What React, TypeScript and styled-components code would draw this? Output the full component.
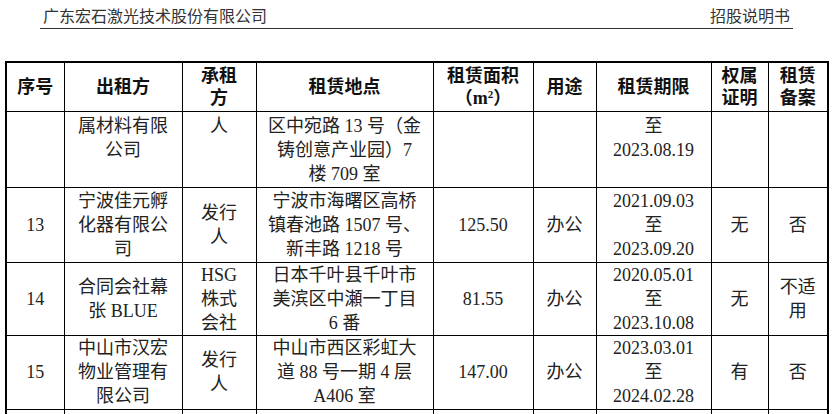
import React from "react";
import styled, { createGlobalStyle } from "styled-components";

const Global = createGlobalStyle`
  html, body { margin: 0; padding: 0; background: #fff; overflow: hidden; }
  body { width: 833px; height: 414px; }
`;

const Page = styled.div`
  width: 833px;
  height: 414px;
  overflow: hidden;
  font-family: "Liberation Serif", "Noto Sans CJK SC", serif;
  color: #222;
`;

const DocHeader = styled.div`
  margin: 0 40px 0 40px;
  padding: 7px 3px 1px 3px;
  display: flex;
  justify-content: space-between;
  align-items: flex-end;
  border-bottom: 1px solid #333;
  font-size: 16px;
  line-height: 20px;
  color: #333;
`;

const Table = styled.table`
  margin: 32px 0 0 5px;
  width: 824px;
  border-collapse: collapse;
  table-layout: fixed;
  border: 2px solid #000;
`;

const HeadCell = styled.th`
  border: 1px solid #000;
  padding: 0 4px;
  font-family: "Liberation Serif", "Noto Sans CJK SC", sans-serif;
  font-weight: 700;
  font-size: 18px;
  line-height: 22px;
  color: #111;
  text-align: center;
  vertical-align: middle;
  white-space: nowrap;
`;

const Cell = styled.td<{ $top?: boolean }>`
  border: 1px solid #000;
  padding: ${(p) => (p.$top ? "2px 4px 0" : "0 4px")};
  font-size: 18px;
  line-height: 24px;
  text-align: center;
  vertical-align: ${(p) => (p.$top ? "top" : "middle")};
  white-space: nowrap;
  overflow: hidden;
`;

const Row = styled.tr<{ $h: number }>`
  height: ${(p) => p.$h}px;
`;

const Sup = styled.sup`
  font-size: 11px;
  line-height: 0;
  vertical-align: 6px;
`;

const widths = [58, 118, 74, 177, 100, 63, 115, 57, 60];

type Line = React.ReactNode;
const ml = (lines: Line[]) =>
  lines.map((l, i) => (
    <React.Fragment key={i}>
      {i > 0 && <br />}
      {l}
    </React.Fragment>
  ));

const rows: { h: number; top?: boolean; cells: Line[][] }[] = [
  {
    h: 76,
    top: true,
    cells: [
      [],
      ["属材料有限", "公司"],
      ["人"],
      ["区中宛路 13 号（金", "铸创意产业园）7", "楼 709 室"],
      [],
      [],
      ["至", "2023.08.19"],
      [],
      [],
    ],
  },
  {
    h: 75,
    cells: [
      ["13"],
      ["宁波佳元孵", "化器有限公", "司"],
      ["发行", "人"],
      ["宁波市海曙区高桥", "镇春池路 1507 号、", "新丰路 1218 号"],
      ["125.50"],
      ["办公"],
      ["2021.09.03", "至", "2023.09.20"],
      ["无"],
      ["否"],
    ],
  },
  {
    h: 73,
    cells: [
      ["14"],
      ["合同会社幕", "张 BLUE"],
      ["HSG", "株式", "会社"],
      ["日本千叶县千叶市", "美滨区中瀬一丁目", "6 番"],
      ["81.55"],
      ["办公"],
      ["2020.05.01", "至", "2023.10.08"],
      ["无"],
      ["不适", "用"],
    ],
  },
  {
    h: 74,
    cells: [
      ["15"],
      ["中山市汉宏", "物业管理有", "限公司"],
      ["发行", "人"],
      ["中山市西区彩虹大", "道 88 号一期 4 层", "A406 室"],
      ["147.00"],
      ["办公"],
      ["2023.03.01", "至", "2024.02.28"],
      ["有"],
      ["否"],
    ],
  },
  {
    h: 40,
    cells: [[], [], [], [], [], [], [], [], []],
  },
];

const heads: Line[][] = [
  ["序号"],
  ["出租方"],
  ["承租", "方"],
  ["租赁地点"],
  [
    "租赁面积",
    <span key="m">
      （m<Sup>2</Sup>）
    </span>,
  ],
  ["用途"],
  ["租赁期限"],
  ["权属", "证明"],
  ["租赁", "备案"],
];

export default function App() {
  return (
    <Page>
      <Global />
      <DocHeader>
        <span>广东宏石激光技术股份有限公司</span>
        <span>招股说明书</span>
      </DocHeader>
      <Table>
        <colgroup>
          {widths.map((w, i) => (
            <col key={i} style={{ width: w }} />
          ))}
        </colgroup>
        <thead>
          <Row $h={49}>
            {heads.map((h, i) => (
              <HeadCell key={i}>{ml(h)}</HeadCell>
            ))}
          </Row>
        </thead>
        <tbody>
          {rows.map((r, ri) => (
            <Row key={ri} $h={r.h}>
              {r.cells.map((c, ci) => (
                <Cell key={ci} $top={r.top}>
                  {ml(c)}
                </Cell>
              ))}
            </Row>
          ))}
        </tbody>
      </Table>
    </Page>
  );
}
